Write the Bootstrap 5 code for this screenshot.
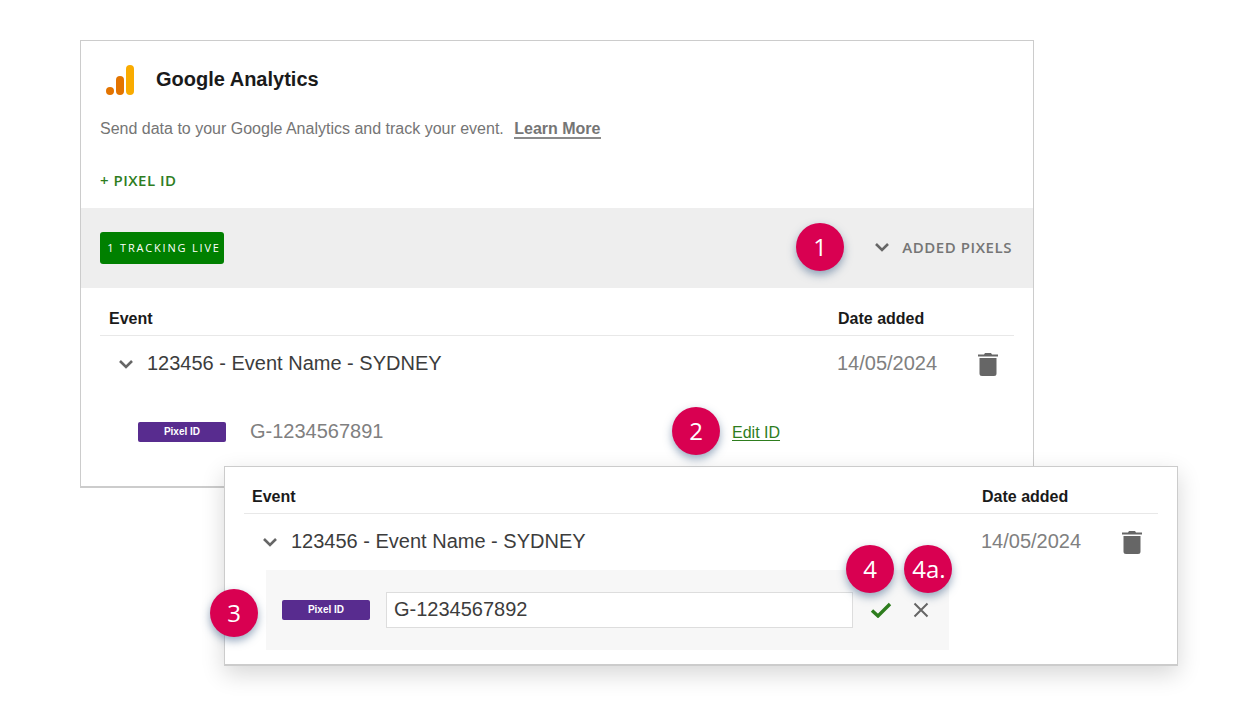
<!DOCTYPE html>
<html lang="en">
<head>
<meta charset="UTF-8" />
<title>Google Analytics pixel</title>
<link href="https://cdn.jsdelivr.net/npm/bootstrap@5.3.0/dist/css/bootstrap.min.css" rel="stylesheet"/>
<style>
body {
  background-color: #fff;
  font-family: "Liberation Sans", Arial, sans-serif;
  color: #333;
  width: 1240px;
  height: 712px;
  overflow: hidden;
}
.panel-main {
  position: relative;
  width: 954px;
  height: 448px;
  margin: 40px 0 0 80px;
  background: #fff;
  border: 1px solid #ccc;
  border-bottom-width: 2px;
}
.panel-edit {
  position: relative;
  z-index: 2;
  width: 954px;
  height: 200px;
  margin: -22px 0 0 224px;
  background: #fff;
  border: 1px solid #ccc;
  border-bottom-width: 2px;
  box-shadow: 0 8px 22px rgba(0, 0, 0, .16);
}
.head-row { height: 65px; padding: 12px 0 0 25px; }
.head-row svg { margin-right: 20px; }
.head-title { font-size: 20px; font-weight: 700; color: #1a1a1a; line-height: 30px; margin-bottom: 2px; }
.intro { font-size: 16px; color: #757575; padding-left: 19px; margin-top: 12px; line-height: 22px; }
.learn {
  font-weight: 700;
  color: #757575;
  margin-left: 6px;
  text-decoration: none;
  border-bottom: 2px solid #8a8a8a;
}
.add-pixel {
  font-family: "Open Sans", sans-serif;
  font-size: 15px;
  font-weight: 600;
  letter-spacing: .5px;
  color: #2e7d1e;
  padding-left: 19px;
  margin-top: 29px;
  line-height: 22px;
}
.band {
  height: 80px;
  margin-top: 17px;
  background: #eee;
  padding: 0 21px 0 19px;
}
.live-tag {
  font-family: "Open Sans", sans-serif;
  font-size: 11px;
  letter-spacing: 1.8px;
  color: #fff;
  background: #008000;
  border-radius: 3px;
  width: 124px;
  height: 32px;
  padding-left: 4px;
  line-height: 32px;
  text-align: center;
}
.added {
  font-family: "Open Sans", sans-serif;
  font-size: 15px;
  font-weight: 600;
  letter-spacing: .55px;
  color: #757575;
  margin-bottom: 2px;
}
.added svg { margin-right: 12px; }
.event-table { padding: 0 19px; }
.event-head {
  height: 48px;
  padding: 16px 0 0 9px;
  border-bottom: 1px solid #e8e8e8;
  font-size: 16px;
  font-weight: 700;
  color: #1a1a1a;
  line-height: 30px;
}
.col-event { width: 729px; }
.event-row { height: 56px; padding-left: 18px; }
.event-name { font-size: 20px; color: #3c3c3c; margin: 0 0 2px 13px; width: 690px; }
.event-date { font-size: 20px; color: #808080; width: 141px; margin-bottom: 2px; }
.pixel-row { padding: 30px 0 0 38px; height: 50px; }
.pixel-tag {
  width: 88px;
  height: 20px;
  line-height: 20px;
  flex: none;
  background: #582c8f;
  border-radius: 2px;
  color: #fff;
  font-size: 10px;
  font-weight: 700;
  text-align: center;
}
.pixel-val { font-size: 20px; color: #808080; margin: 0 0 2px 24px; width: 482px; }
.edit-link { font-size: 16px; color: #2e7d1e; text-underline-offset: 2px; margin-top: 2px; }
.panel-edit .event-head { height: 47px; padding: 15px 0 0 8px; }
.panel-edit .col-event { width: 730px; }
.edit-box {
  width: 683px;
  height: 80px;
  margin: 0 0 0 22px;
  padding-left: 16px;
  background: #f7f7f7;
}
.pixel-input {
  width: 467px;
  height: 36px;
  margin-left: 16px;
  padding: 0 7px 2px;
  font-family: inherit;
  font-size: 20px;
  color: #3c3c3c;
  background: #fff;
  border: 1px solid #ddd;
  border-radius: 0;
}
.pixel-input:focus { outline: none; }
.ok-icon { margin-left: 17px; }
.cancel-icon { margin-left: 21px; }
.step {
  position: absolute;
  width: 48px;
  height: 48px;
  border-radius: 50%;
  background: #d90051;
  color: #fff;
  font-family: "Open Sans", sans-serif;
  font-size: 24px;
  line-height: 48px;
  text-align: center;
  box-shadow: 0 4px 9px rgba(50, 85, 130, .5);
  z-index: 3;
}
.step-1 { left: 715px; top: 182px; }
.step-2 { left: 591px; top: 366px; }
.step-3 { left: -15px; top: 122px; }
.step-4 { left: 621px; top: 78px; }
.step-4a { left: 679px; top: 78px; padding-left: 2px; }
</style>
</head>
<body>

<div class="panel-main">
  <div class="head-row d-flex align-items-center">
    <svg width="30" height="30" viewBox="0 0 30 30">
      <circle cx="4" cy="26" r="4" fill="#e37400"/>
      <rect x="10" y="11" width="8" height="19" rx="4" fill="#e37400"/>
      <rect x="20" y="0" width="8" height="30" rx="4" fill="#f9ab00"/>
    </svg>
    <span class="head-title">Google Analytics</span>
  </div>
  <div class="intro">Send data to your Google Analytics and track your event. <a class="learn" href="#">Learn More</a></div>
  <div class="add-pixel">+ PIXEL ID</div>
  <div class="band d-flex align-items-center justify-content-between">
    <div class="live-tag">1 TRACKING LIVE</div>
    <div class="added d-flex align-items-center">
      <svg width="16" height="10" viewBox="0 0 16 10"><path d="M2 2l6 6 6-6" fill="none" stroke="#666" stroke-width="2.6"/></svg>
      ADDED PIXELS
    </div>
  </div>
  <div class="event-table">
    <div class="event-head d-flex">
      <div class="col-event">Event</div>
      <div>Date added</div>
    </div>
    <div class="event-row d-flex align-items-center">
      <svg width="16" height="10" viewBox="0 0 16 10"><path d="M2 2l6 6 6-6" fill="none" stroke="#666" stroke-width="2.6"/></svg>
      <div class="event-name">123456 - Event Name - SYDNEY</div>
      <div class="event-date">14/05/2024</div>
      <svg width="20" height="24" viewBox="0 0 20 24"><path d="M0 2.500h6l1-1.500h6l1 1.500h6v2H0zM1.500 6h17v15.500a2.500 2.500 0 0 1-2.500 2.500H4a2.500 2.500 0 0 1-2.500-2.500z" fill="#666"/></svg>
    </div>
    <div class="pixel-row d-flex align-items-center">
      <div class="pixel-tag">Pixel ID</div>
      <div class="pixel-val">G-1234567891</div>
      <a class="edit-link" href="#">Edit ID</a>
    </div>
  </div>
  <div class="step step-1">1</div>
  <div class="step step-2">2</div>
</div>

<div class="panel-edit">
  <div class="event-table">
    <div class="event-head d-flex">
      <div class="col-event">Event</div>
      <div>Date added</div>
    </div>
    <div class="event-row d-flex align-items-center">
      <svg width="16" height="10" viewBox="0 0 16 10"><path d="M2 2l6 6 6-6" fill="none" stroke="#666" stroke-width="2.6"/></svg>
      <div class="event-name">123456 - Event Name - SYDNEY</div>
      <div class="event-date">14/05/2024</div>
      <svg width="20" height="24" viewBox="0 0 20 24"><path d="M0 2.500h6l1-1.500h6l1 1.500h6v2H0zM1.500 6h17v15.500a2.500 2.500 0 0 1-2.500 2.500H4a2.500 2.500 0 0 1-2.500-2.500z" fill="#666"/></svg>
    </div>
    <div class="edit-box d-flex align-items-center">
      <div class="pixel-tag">Pixel ID</div>
      <input class="pixel-input" type="text" value="G-1234567892"/>
      <svg class="ok-icon" width="22" height="16" viewBox="0 0 22 16"><path d="M2 8.500l6 5.500L20 2" fill="none" stroke="#2e7d1e" stroke-width="3.400"/></svg>
      <svg class="cancel-icon" width="16" height="16" viewBox="0 0 16 16"><path d="M1.500 1.500l13 13M14.500 1.500l-13 13" fill="none" stroke="#666" stroke-width="2"/></svg>
    </div>
  </div>
  <div class="step step-3">3</div>
  <div class="step step-4">4</div>
  <div class="step step-4a">4a.</div>
</div>

<script src="https://cdn.jsdelivr.net/npm/bootstrap@5.3.0/dist/js/bootstrap.bundle.min.js"></script>
</body>
</html>
